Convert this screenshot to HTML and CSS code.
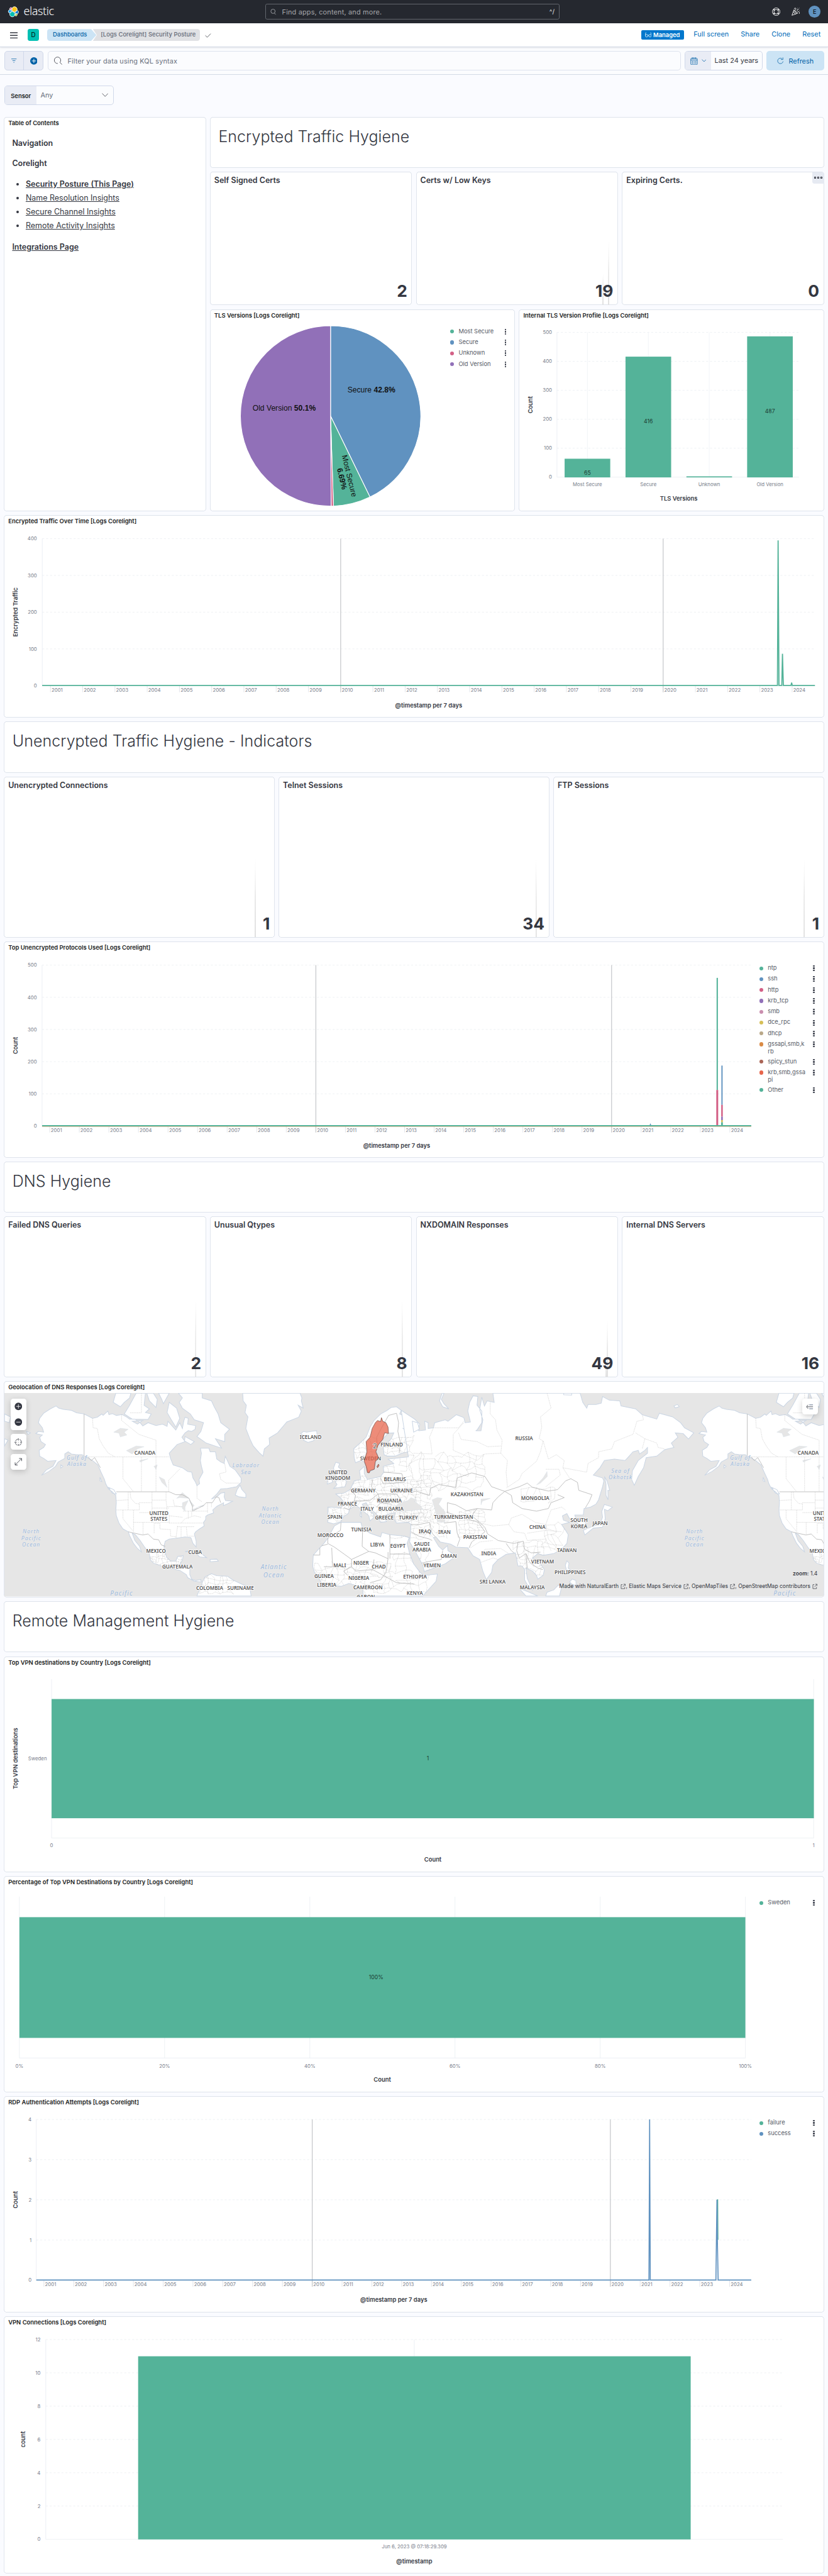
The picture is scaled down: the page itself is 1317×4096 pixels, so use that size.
FILE: index.html
```html
<!DOCTYPE html>
<html lang="en">
<head>
<meta charset="utf-8">
<title>[Logs Corelight] Security Posture - Elastic</title>
<link rel="stylesheet" href="styles.css">
</head>
<body>
<header class="topbar">
  <a class="brand">
    <svg class="brand-mark" viewBox="-1 -1 34 34"><g stroke="#fff" stroke-width="1.6" stroke-linejoin="round"><path fill="#FEC514" d="M12.58 13.787l7.002 3.211 7.066-6.213a7.849 7.849 0 00.152-1.557c0-4.287-3.488-7.773-7.776-7.773a7.78 7.78 0 00-6.415 3.396l-1.176 6.1 1.147 2.836z"/><path fill="#00BFB3" d="M5.333 21.228a7.964 7.964 0 00-.151 1.573 7.8 7.8 0 007.79 7.79 7.787 7.787 0 006.439-3.415l1.166-6.075-1.556-2.985-7.03-3.203-6.658 6.315z"/><path fill="#F04E98" d="M5.288 9.067l4.8 1.134L11.14 4.742a3.785 3.785 0 00-5.852 4.325z"/><path fill="#1BA9F5" d="M4.872 10.214a5.294 5.294 0 00-3.595 4.992 5.28 5.28 0 003.4 4.929l6.732-6.086-1.236-2.642-5.301-1.193z"/><path fill="#93C90E" d="M20.873 27.177a3.758 3.758 0 002.285.778 3.785 3.785 0 003.564-5.098l-4.796-1.12-1.053 5.44z"/><path fill="#0077CC" d="M21.848 20.563l5.279 1.234a5.297 5.297 0 003.595-4.991 5.283 5.283 0 00-3.408-4.932l-6.904 6.055 1.438 2.634z"/></g></svg>
    <span class="brand-name">elastic</span>
  </a>
  <div class="global-search">
    <svg class="gs-icon" viewBox="0 0 16 16"><circle cx="7" cy="6.6" r="5.6"/><path d="M10.6 11.2l3.6 4"/></svg>
    <span>Find apps, content, and more.</span><b>^/</b>
  </div>
  <div class="top-actions">
    <svg viewBox="0 0 16 16"><circle cx="8" cy="8" r="7.3"/><circle cx="8" cy="8" r="4.4"/><path stroke-width="2.2" d="M3 3.4l2 2M13 3.4l-2 2M3 12.600l2-2M13 12.600l-2-2"/></svg>
    <svg viewBox="0 0 16 16"><path d="M4.8 4.2L.8 15l11-4zM3.6 8l4 5M4.6 5.4l5 6M4.800 2.400Q6 .4 8 1.200Q9.400 2.600 7.400 5M10.500 6.500l1.600-3 1.600-.4M11.500 8.500l2.600-.6 1.400 1.200q.4 2-1 3M11 1.200h.6M14.400 1h.6M15 5.400h.5"/></svg>
    <span class="avatar">E</span>
  </div>
</header>
<nav class="appbar">
  <svg class="menu" viewBox="0 0 18 15"><path d="M0 1.4h18M0 7.5h18M0 13.6h18"/></svg>
  <span class="space">D</span>
  <div class="crumbs"><a class="crumb first">Dashboards</a><span class="crumb last">[Logs Corelight] Security Posture</span></div>
  <svg class="tick" viewBox="0 0 14 10"><path d="M.8 4.8l4.4 4.2L13.2.8"/></svg>
  <div class="app-links">
    <span class="badge"><svg viewBox="0 0 16 14"><circle cx="3.8" cy="9" r="3.2"/><circle cx="12.2" cy="9" r="3.2"/><path d="M.8 8.4L1 2.600Q1.200 1.400 3 1.400M15.200 8.400L15 2.600Q14.800 1.400 13 1.400M6.800 8.400q1.200-1 2.400 0"/></svg>Managed</span>
    <a>Full screen</a><a>Share</a><a>Clone</a><a>Reset</a>
  </div>
</nav>
<section class="querybar">
  <div class="filter-buttons">
    <span><svg viewBox="0 0 12 10"><path d="M0 1h12M2.6 5h6.8M5 9h2"/></svg></span>
    <span><svg class="plus" viewBox="0 0 17 17"><circle cx="8.5" cy="8.5" r="8.5"/><path d="M8.5 3.8v9.4M3.8 8.5h9.4"/></svg></span>
  </div>
  <div class="kql"><svg viewBox="0 0 18 18"><path d="M8 15A7 7 0 1 1 12.800 12.600L17.200 17.200"/></svg><span>Filter your data using KQL syntax</span></div>
  <div class="datepicker">
    <span class="cal"><svg viewBox="0 0 16 17"><rect x="1" y="2.4" width="14" height="13.8" rx="1.6"/><path d="M1 6h14M4.4 0v4M11.6 0v4M7.9 0v4"/><path class="dots" d="M3.6 8.8h9M3.6 11.2h9M3.6 13.6h9"/></svg><svg class="chev" viewBox="0 0 11 7"><path d="M.6.8l4.9 5 4.9-5"/></svg></span>
    <span class="range">Last 24 years</span>
  </div>
  <a class="refresh"><svg viewBox="0 0 15 16"><path d="M11.4 3.4A6.3 6.3 0 1 0 13.8 9.6M13.4.6v4.6H8.8"/></svg>Refresh</a>
</section>
<section class="controls">
  <div class="control"><b>Sensor</b><span>Any</span><svg class="chev" viewBox="0 0 15 9"><path d="M.8.8l6.7 7 6.7-7"/></svg></div>
</section>
<main class="grid">
  <article class="panel w12 h29">
    <h2>Table of Contents</h2>
    <div class="toc">
      <p><b>Navigation</b></p>
      <p><b>Corelight</b></p>
      <ul><li><a><b>Security Posture (This Page)</b></a></li><li><a>Name Resolution Insights</a></li><li><a>Secure Channel Insights</a></li><li><a>Remote Activity Insights</a></li></ul>
      <p><a><b>Integrations Page</b></a></p>
    </div>
  </article>
  <article class="panel w36 h4"><h1>Encrypted Traffic Hygiene</h1></article>
  <article class="panel metric w12 h10"><h3>Self Signed Certs</h3><strong>2</strong></article>
  <article class="panel metric w12 h10"><i class="spark" style="right:33px;height:72px"></i><i class="spark" style="right:20px;height:148px"></i><h3>Certs w/ Low Keys</h3><strong>19</strong></article>
  <article class="panel metric w12 h10"><span class="panel-menu"><i></i><i></i><i></i></span><h3>Expiring Certs.</h3><strong>0</strong></article>
  <article class="panel w18 h15"><h2>TLS Versions [Logs Corelight]</h2><div class="plot"><div id="pie"></div><ul class="legend wide"><li style="--c:#54b399"><span>Most Secure</span></li><li style="--c:#6092c0"><span>Secure</span></li><li style="--c:#d36086"><span>Unknown</span></li><li style="--c:#9170b8"><span>Old Version</span></li></ul></div></article>
  <article class="panel w18 h15"><h2>Internal TLS Version Profile [Logs Corelight]</h2><div class="plot"><div id="profile"></div></div></article>
  <article class="panel w48 h15"><h2>Encrypted Traffic Over Time [Logs Corelight]</h2><div class="plot"><div id="encrypted"></div></div></article>
  <article class="panel w48 h4"><h1>Unencrypted Traffic Hygiene - Indicators</h1></article>
  <article class="panel metric w16 h12"><i class="spark" style="right:43px;height:180px"></i><h3>Unencrypted Connections</h3><strong>1</strong></article>
  <article class="panel metric w16 h12"><i class="spark" style="right:29px;height:180px"></i><h3>Telnet Sessions</h3><strong>34</strong></article>
  <article class="panel metric w16 h12"><i class="spark" style="right:44px;height:180px"></i><h3>FTP Sessions</h3><strong>1</strong></article>
  <article class="panel w48 h16"><h2>Top Unencrypted Protocols Used [Logs Corelight]</h2><div class="plot"><div id="protocols"></div>
    <ul class="legend"><li style="--c:#54b399"><span>ntp</span></li><li style="--c:#6092c0"><span>ssh</span></li><li style="--c:#d36086"><span>http</span></li><li style="--c:#9170b8"><span>krb_tcp</span></li><li style="--c:#ca8eae"><span>smb</span></li><li style="--c:#d6bf57"><span>dce_rpc</span></li><li style="--c:#b9a888"><span>dhcp</span></li><li style="--c:#da8b45"><span>gssapi,smb,k<br>rb</span></li><li style="--c:#aa6556"><span>spicy_stun</span></li><li style="--c:#e7664c"><span>krb,smb,gssa<br>pi</span></li><li style="--c:#54b399"><span>Other</span></li></ul></div></article>
  <article class="panel w48 h4"><h1>DNS Hygiene</h1></article>
  <article class="panel metric w12 h12"><i class="spark" style="right:22px;height:178px"></i><h3>Failed DNS Queries</h3><strong>2</strong></article>
  <article class="panel metric w12 h12"><i class="spark" style="right:21px;height:178px"></i><h3>Unusual Qtypes</h3><strong>8</strong></article>
  <article class="panel metric w12 h12"><i class="spark" style="right:26px;height:32px"></i><i class="spark" style="right:23px;height:130px"></i><h3>NXDOMAIN Responses</h3><strong>49</strong></article>
  <article class="panel metric w12 h12"><h3>Internal DNS Servers</h3><strong>16</strong></article>
  <article class="panel w48 h16"><h2>Geolocation of DNS Responses [Logs Corelight]</h2>
    <div class="map"><div id="map"></div>
      <div class="map-tools">
        <div class="tool two"><svg viewBox="0 0 18 18"><circle cx="9" cy="9" r="8.5"/><path d="M9 4v10M4 9h10"/></svg><svg viewBox="0 0 18 18"><circle cx="9" cy="9" r="8.5"/><path d="M4 9h10"/></svg></div>
        <div class="tool line"><svg viewBox="0 0 18 18"><circle cx="9" cy="9" r="7.2" stroke-dasharray="7.3 4" stroke-dashoffset="-2"/><path d="M9 0v5M9 13v5M0 9h5M13 9h5M8.5 9h1"/></svg></div>
        <div class="tool line"><svg viewBox="0 0 18 18"><path d="M2 16L16 2M10.5 1.5H16.5V7.5M1.5 10.5V16.5H7.5"/></svg></div>
      </div>
      <div class="tool line layers"><svg viewBox="0 0 18 14"><path d="M2 7h14M5 2.500Q2 5 1.500 7Q2 9 5 11.500"/><path class="soft" d="M7.500 2.500H16M7.500 11.500H16"/></svg></div>
      <div class="map-zoom"><b>zoom:</b> 1.4</div>
      <div class="credits">Made with NaturalEarth <svg viewBox="0 0 13 13"><path d="M5 2H1.500V12H10.500V8M7.500 1H12V5.500M12 1L5.500 7.500"/></svg>, Elastic Maps Service <svg viewBox="0 0 13 13"><path d="M5 2H1.500V12H10.500V8M7.500 1H12V5.500M12 1L5.500 7.500"/></svg>, OpenMapTiles <svg viewBox="0 0 13 13"><path d="M5 2H1.500V12H10.500V8M7.500 1H12V5.500M12 1L5.500 7.500"/></svg>, OpenStreetMap contributors <svg viewBox="0 0 13 13"><path d="M5 2H1.500V12H10.500V8M7.500 1H12V5.500M12 1L5.500 7.500"/></svg></div>
    </div></article>
  <article class="panel w48 h4"><h1>Remote Management Hygiene</h1></article>
  <article class="panel w48 h16"><h2>Top VPN destinations by Country [Logs Corelight]</h2><div class="plot"><div id="vpncountry"></div></div></article>
  <article class="panel w48 h16"><h2>Percentage of Top VPN Destinations by Country [Logs Corelight]</h2><div class="plot"><div id="vpnpercent"></div><ul class="legend"><li style="--c:#54b399"><span>Sweden</span></li></ul></div></article>
  <article class="panel w48 h16"><h2>RDP Authentication Attempts [Logs Corelight]</h2><div class="plot"><div id="rdp"></div><ul class="legend"><li style="--c:#54b399"><span>failure</span></li><li style="--c:#6092c0"><span>success</span></li></ul></div></article>
  <article class="panel w48 h19"><h2>VPN Connections [Logs Corelight]</h2><div class="plot"><div id="vpnconn"></div></div></article>
</main>
<script src="app.js"></script>
</body>
</html>
```
FILE: styles.css
```css
*{box-sizing:border-box}
html{overflow:hidden}
body{margin:0;width:1898px;height:5902px;zoom:.693888;background:#fafbff;color:#343741;font-family:Inter,"Liberation Sans",sans-serif;font-size:15.75px;overflow:hidden}
svg{display:block;fill:none;stroke:currentColor;stroke-width:1.1;flex:none}
h1,h2,h3,p,ul{margin:0;padding:0}
.topbar{height:54px;background:#25282f;color:#fff;display:grid;grid-template-columns:608px 675px 1fr;align-items:center}
.brand{display:flex;align-items:center;gap:9px;padding-left:18px}
.brand-mark{width:27px;height:28px}
.brand-name{font:300 26px/30px "Noto Sans","Open Sans",sans-serif;letter-spacing:-.6px;margin-top:-3px}
.global-search{height:36px;border:1px solid #63676e;border-radius:4px;display:flex;align-items:center;padding:0 10px;gap:13px;color:#a5a7ab;font-size:15.75px;letter-spacing:.25px}
.global-search b{margin-left:auto;color:#d5d6d8;font-size:14px;font-weight:500}
.gs-icon{width:14px;height:14px;color:#c9cbcf}
.top-actions{display:flex;justify-content:flex-end;align-items:center;padding-right:17px;gap:26px}
.top-actions svg{width:19px;height:19px}
.avatar{width:27px;height:27px;border-radius:50%;background:#6092c0;color:#000;font-size:13.500px;display:grid;place-items:center;margin-left:-5px}
.appbar{height:54px;background:#fff;border-bottom:1px solid #d3dae6;box-shadow:0 1px 5px rgba(60,70,100,.22);display:flex;align-items:center;position:relative;padding:0 17px 0 23px}
.menu{width:18px;height:15px;stroke-width:2}
.space{width:27px;height:27px;border-radius:5px;background:#00bfb3;color:#000;display:grid;place-items:center;font-size:14px;margin-left:22px}
.crumbs{display:flex;margin-left:18px;font-size:13.500px;font-weight:500;line-height:27px;letter-spacing:.1px}
.crumb.first{width:113px;padding-left:13px;background:#cce4f5;color:#0061a6;border-radius:6px 0 0 6px;clip-path:polygon(0 0,101px 0,100% 50%,101px 100%,0 100%)}
.crumb.last{width:246px;padding-left:18px;margin-left:-8px;background:#e0e1e4;color:#646a77;border-radius:0 6px 6px 0;clip-path:polygon(0 0,100% 0,100% 100%,0 100%,9px 50%);white-space:nowrap}
.tick{width:14px;height:10px;margin-left:11px;margin-top:2px}
.app-links{margin-left:auto;display:flex;align-items:center;gap:27.500px;color:#006bb8;font-size:15.750px;font-weight:400;margin-top:-4px}
.badge{display:flex;align-items:center;gap:4px;background:#07c;color:#fff;font-weight:600;font-size:13.500px;height:22px;padding:0 9px;border-radius:3px;margin-right:-5px;margin-top:4px;width:98px}
.badge svg{width:15px;height:13px}
.querybar{height:63.500px;border-bottom:1px solid #d3dae6;display:flex;gap:9.500px;padding:9px 8px 9px 9.500px;background:#fbfcfe}
.querybar>*{height:45px;border-radius:7px}
.filter-buttons{width:90.500px;display:flex;background:#e9ecf5;border:1px solid #d0d8ea;color:#0061a6}
.filter-buttons span{flex:1;display:grid;place-items:center}
.filter-buttons span+span{border-left:1px solid #d0d8ea}
.filter-buttons svg{width:12px;height:10px}
.filter-buttons .plus{width:17px;height:17px;fill:#0061a6;stroke:none}
.plus path{stroke:#fff;stroke-width:1.4}
.kql{flex:1;border:1px solid #dde2ee;display:flex;align-items:center;padding-left:13px;gap:12px;color:#69707d;background:#fbfcfe;letter-spacing:.2px}
.kql svg{width:19px;height:19px;color:#343741}
.datepicker{width:178px;display:flex;border:1px solid #d0d8ea;overflow:hidden;background:#fbfcfe}
.cal{width:59px;background:#e9ecf5;display:flex;align-items:center;justify-content:center;gap:9px;color:#0061a6}
.cal svg{width:17px;height:18px}
.cal .dots{stroke-dasharray:1.800 1.800;stroke-width:1.500}
.cal .chev{width:11px;height:7px}
.range{flex:1;text-align:center;line-height:42px;font-size:15.750px;white-space:nowrap}
.refresh{width:133px;background:#cce4f5;color:#0061a6;display:flex;align-items:center;justify-content:center;gap:11px;font-weight:400;font-size:15.750px}
.refresh svg{width:15px;height:16px}
.controls{height:96px;padding:24px 9.500px}
.control{width:251px;height:45px;border:1px solid #d0d8ea;border-radius:7px;display:flex;align-items:center;overflow:hidden;background:#fbfcfe}
.control b{width:73px;align-self:stretch;background:#e9ecf5;font-size:13.500px;font-weight:600;color:#1a1c21;line-height:45px;padding-left:14px}
.control span{margin-left:9px;color:#69707d;margin-right:auto}
.control .chev{width:15px;height:9px;margin-right:11px}
.grid{display:grid;grid-template-columns:repeat(48,minmax(0,1fr));grid-template-rows:repeat(179,minmax(0,1fr));height:5629.500px;gap:9px;padding:0 9px}
.panel{background:#fff;box-shadow:inset 0 0 0 1px #d3dae6;border-radius:7px;position:relative;min-width:0;overflow:hidden}
.w12{grid-column:span 12}.w16{grid-column:span 16}.w18{grid-column:span 18}.w36{grid-column:span 36}.w48{grid-column:span 48}
.h4{grid-row:span 4}.h10{grid-row:span 10}.h12{grid-row:span 12}.h15{grid-row:span 15}.h16{grid-row:span 16}.h19{grid-row:span 19}.h29{grid-row:span 29}
h2{font-size:13.600px;line-height:28px;height:27px;padding-left:10px;font-weight:600;color:#1a1c21}
h1{font-size:36px;font-weight:300;line-height:44px;padding:23px 19.500px;letter-spacing:.08px}
.toc{padding:22px 19px;font-size:18px;line-height:22px}
.toc b{font-weight:600}
.toc p{margin-bottom:25px}
.toc ul{padding-left:31px;margin-bottom:26px}
.toc li{margin-bottom:10px}
.toc a{text-decoration:underline;text-underline-offset:2px}
.metric{display:flex;flex-direction:column;justify-content:space-between;padding:9px 11px 11px 10px}
.metric h3{font-size:18px;line-height:24px;font-weight:600}
.metric strong{font-size:38px;line-height:44px;font-weight:700;text-align:right;position:relative}
.spark{position:absolute;bottom:1px;width:3px;background:linear-gradient(#f4f4f4,#e0e0e0);clip-path:polygon(50% 0,100% 50%,100% 100%,0 100%,0 50%)}
.panel-menu{position:absolute;right:0;top:1px;width:27px;height:27px;background:#e6eaf2;border-radius:0 7px 0 5px;display:flex;gap:2.500px;padding:10px 4px}
.panel-menu i{width:5px;height:5px;border:1.500px solid #343741}
.plot{display:flex;align-items:flex-start}
.legend{list-style:none;flex:1;padding:25px 22px 0 5px;font-size:13.500px;color:#565b66}
.legend.wide{padding:15px 20px 0 5px}
.legend li{display:grid;grid-template-columns:9px 1fr 4px;column-gap:10px;line-height:17.500px;min-height:20px;margin-bottom:4.900px;align-items:start}
.legend li:before{content:"";width:9px;height:9px;border-radius:50%;background:var(--c);margin-top:5px}
.legend li:after{content:"";width:4px;height:13px;margin-top:3px;background:repeating-linear-gradient(#50545f 0 3.400px,transparent 3.400px 4.800px)}
.chart{stroke:none}
.chart text{font-family:Inter,"Liberation Sans",sans-serif;fill:#7a808c;font-size:11.250px}
.chart .ttl{font-size:13.500px;font-weight:600;fill:#343741}
.chart .val{fill:#1c3d33;font-size:12.500px}
.chart .pl{font-family:"Liberation Sans",Arial,sans-serif;font-size:17.500px;fill:#111}
.map{position:relative;margin:0 1px;height:466px}
.map-tools{position:absolute;left:14px;top:13px;display:grid;gap:9px}
.tool{width:36px;height:36px;background:#fff;border-radius:6px;display:grid;place-items:center;box-shadow:0 4px 14px rgba(0,0,0,.18)}
.tool.two{height:72px}
.tool svg{width:18px;height:18px;fill:#343741;stroke:none}
.tool path{stroke:#fff;stroke-width:1.200}
.tool.line svg{fill:none;stroke:#343741}
.tool.line path{stroke:#343741}
.tool.line .soft{stroke:#98a2b3;stroke-width:2}
.layers{position:absolute;right:13px;top:13px}
.layers svg{height:14px}
.map-zoom{position:absolute;right:14px;bottom:41px;font-size:12.300px;line-height:20px}
.map-zoom b{font-weight:600}
.credits{position:absolute;right:14px;bottom:12px;font-size:12.300px;line-height:20px;white-space:nowrap}
.credits svg{display:inline-block;width:12px;height:13px;vertical-align:-2px;margin-left:1px}
.land{fill:#fff;stroke:#cbd6e4;stroke-width:1.500;vector-effect:non-scaling-stroke}
.water{fill:#e6e6e6;stroke:#cbd6e4;stroke-width:1}
.admin{fill:none;stroke:#cacaca;stroke-width:.8;vector-effect:non-scaling-stroke;stroke-dasharray:3 1}
.border{fill:none;stroke:#b5b5b5;stroke-width:1.200;vector-effect:non-scaling-stroke}
.chart .country{font:600 11.600px "Noto Sans",sans-serif;fill:#555;stroke:#fff;stroke-width:2.500px;paint-order:stroke;stroke-linejoin:round}
.chart .ocean{font:italic 400 12.300px "Noto Sans",sans-serif;fill:#9db9dc;letter-spacing:1.500px;stroke:#f0f0f0;stroke-width:1.200px;paint-order:stroke}
```
FILE: app.js
```js
const GREEN = '#54b399', BLUE = '#6092c0', PINK = '#d36086', PURPLE = '#9170b8';

function mount(id, x, y, w, h, body) {
  document.getElementById(id).innerHTML =
    `<svg class="chart" width="${w}" height="${h}" viewBox="${x} ${y} ${w} ${h}">${body}</svg>`;
}
const text = (s, x, y, anchor = 'middle', cls = '', extra = '') =>
  `<text x="${x}" y="${y}" dy=".36em" text-anchor="${anchor}" class="${cls}" ${extra}>${s}</text>`;
const line = (x1, y1, x2, y2, color, width = 1.1, dash = '') =>
  `<path d="M${x1} ${y1}L${x2} ${y2}" stroke="${color}" stroke-width="${width}" stroke-dasharray="${dash}" fill="none"/>`;
const rect = (x, y, x2, y2, color = GREEN) =>
  `<rect x="${x}" y="${y}" width="${x2 - x}" height="${y2 - y}" fill="${color}"/>`;
const poly = (pts, color, width = 2.2) =>
  `<polyline points="${pts}" fill="none" stroke="${color}" stroke-width="${width}"/>`;
const side = (s, x, y) => text(s, x, y, 'middle', 'ttl', `transform="rotate(-90 ${x} ${y})"`);

// Horizontal value grid with its labels, drawn upwards from zero.
function valueGrid(x1, x2, zero, top, max, step, labelX) {
  let out = line(x1, top, x1, zero, '#e6eaf2');
  for (let v = 0; v <= max; v += step) {
    const y = zero - (zero - top) * v / max;
    out += line(x1, y, x2, y, '#e9ecf1', 1.1, v ? '4.5 4.5' : '') + text(v, labelX, y, 'end');
  }
  return out;
}
function years(first, pitch, top, zero) {
  let out = '';
  for (let i = 0; i < 24; i++) {
    const x = first + i * pitch, decade = (2001 + i) % 10 === 0;
    out += line(x, decade ? top : zero, x, zero + 15, decade ? '#c6c8cb' : '#d8dce3', decade ? 1.8 : 1.1);
    out += text(2001 + i, x + 2.5, zero + 10, 'start');
  }
  return out;
}

// TLS versions pie
(() => {
  const cx = 758.4, cy = 953.2, r = 206.6;
  const at = f => [cx + r * Math.sin(f * 2 * Math.PI), cy - r * Math.cos(f * 2 * Math.PI)];
  let from = 0, out = '';
  for (const [share, color] of [[.428, BLUE], [.0669, GREEN], [.0041, PINK], [.501, PURPLE]]) {
    const a = at(from), b = at(from + share);
    out += `<path d="M${cx} ${cy}L${a}A${r} ${r} 0 ${share > .5 ? 1 : 0} 1 ${b}Z" fill="${color}" stroke="#fff" stroke-width="1.6"/>`;
    from += share;
  }
  out += text('Secure <tspan font-weight="700">42.8%</tspan>', 852, 892.6, 'middle', 'pl');
  out += text('Old Version <tspan font-weight="700">50.1%</tspan>', 652, 935, 'middle', 'pl');
  out += text('Most Secure', 802, 1090.5, 'middle', 'pl', 'transform="rotate(76.5 802 1090.5)"');
  out += text('<tspan font-weight="700">6.69%</tspan>', 785, 1097, 'middle', 'pl', 'transform="rotate(76.5 785 1097)"');
  mount('pie', 482, 735, 546, 436, out);
})();

// Internal TLS profile
(() => {
  let out = valueGrid(1277.8, 1832.6, 1093.4, 761.6, 500, 100, 1266.4);
  const bars = [['Most Secure', 1347.6, 1051.2, 65, 1083], ['Secure', 1487.2, 817.3, 416, 966], ['Unknown', 1626.8, 1091.6, '', 0], ['Old Version', 1766, 770.8, 487, 943]];
  for (const [name, x, y, v, ly] of bars) {
    out += line(x, 761.6, x, 1093.4, '#edf0f5') + rect(x - 52.3, y, x + 52.3, 1094) + text(name, x, 1110);
    if (v) out += text(v, x, ly, 'middle', 'val');
  }
  out += text('TLS Versions', 1557, 1143, 'middle', 'ttl') + side('Count', 1217, 927.5);
  mount('profile', 1190, 735, 698, 436, out);
})();

// Encrypted traffic over time
mount('encrypted', 9, 1207.5, 1880, 436,
  valueGrid(97.2, 1866.5, 1571, 1234.2, 400, 100, 85) + years(116, 73.92, 1234.2, 1571) +
  poly('97,1570.5 1782.5,1570.5 1784,1238 1786,1570.5 1792.500,1570.5 1794,1498 1796,1570.5 1813.500,1570.5 1815,1564 1816.500,1570.5 1868.500,1570.5', GREEN, 2.6) +
  text('@timestamp per 7 days', 983, 1616, 'middle', 'ttl') + side('Encrypted Traffic', 36.4, 1402.6));

// Unencrypted protocols
mount('protocols', 9, 2184, 1727, 467,
  valueGrid(96.8, 1722.5, 2579.4, 2210.8, 500, 100, 84.7) + years(114.3, 67.79, 2210.8, 2579.4) +
  poly('1490,2579 1491.3,2576 1492.500,2579', BLUE) +
  line(1644.5, 2240, 1644.5, 2497, GREEN, 3) + line(1644.5, 2497, 1644.5, 2579, PINK, 4.4) +
  line(1655.4, 2441, 1655.4, 2531, BLUE, 2.8) + line(1655.4, 2531, 1655.4, 2558, PINK, 3.6) + line(1655.4, 2558, 1655.4, 2566, PURPLE, 3.8) +
  line(1655.4, 2566, 1655.4, 2571, '#d6bf57', 4) + line(1655.4, 2571, 1655.4, 2579, GREEN, 4) +
  line(96.8, 2580.6, 1722.5, 2580.6, '#da8b45', 1) + line(96.8, 2579, 1722.5, 2579, GREEN, 2.8) +
  text('@timestamp per 7 days', 909.7, 2624.7, 'middle', 'ttl') + side('Count', 35.7, 2394.8));

// VPN destinations
mount('vpncountry', 9, 3822, 1880, 467,
  line(118.6, 3848, 118.6, 4212, '#e6eaf2') + line(1865.5, 3848, 1865.5, 4212, '#e9ecf1') + line(118.6, 4212, 1865.5, 4212, '#e9ecf1') +
  rect(118.6, 3893.4, 1866, 4166.6) + text('Sweden', 107.7, 4029.6, 'end') + text('0', 118.6, 4229) + text('1', 1865.5, 4229) +
  text('1', 981, 4029.6, 'middle', 'val') + text('Count', 992.6, 4261, 'middle', 'ttl') + side('Top VPN destinations', 35.7, 4029.6));

(() => {
  let out = line(44.8, 4715.7, 1709, 4715.7, '#e6eaf2');
  for (let i = 0; i <= 5; i++) out += line(44.8 + i * 332.84, 4346, 44.8 + i * 332.84, 4715.7, '#e9ecf1') + text(i * 20 + '%', 44.8 + i * 332.84, 4734);
  out += rect(44.8, 4392.9, 1709, 4669.6) + text('100%', 862.5, 4531, 'middle', 'val') + text('Count', 876.6, 4764.8, 'middle', 'ttl');
  mount('vpnpercent', 9, 4326, 1727, 467, out);
})();

// RDP attempts
mount('rdp', 9, 4830, 1727, 467,
  valueGrid(83.5, 1722.5, 5224.4, 4856, 4, 1, 72.6) + years(101, 68.34, 4856, 5224.4) +
  poly('1644.2,5040 1645.600,5040 1646.200,5132', GREEN, 2) +
  poly('83.500,5224 1488,5224 1489.500,4856 1491,5224 1641.500,5224 1643.800,5040 1644.800,5132 1646.500,5224 1722.500,5224', BLUE, 2.4) +
  text('@timestamp per 7 days', 903, 5269, 'middle', 'ttl') + side('Count', 35.7, 5040));

// VPN connections
mount('vpnconn', 9, 5334, 1880, 561,
  valueGrid(105.3, 1795, 5817.8, 5360, 12, 2, 93.2) + line(950, 5360, 950, 5400, '#e6eaf2') +
  rect(317, 5398.3, 1583.6, 5818) + text('Jun 6, 2023 @ 07:18:29.309', 950, 5834) +
  text('@timestamp', 950, 5867.5, 'middle', 'ttl') + side('count', 53.3, 5588.5));

// World map. Tile units are stretched to the projection by the group transform.
(() => {
  const america = 'M150 270L165 235 190 205 212 185 222 200 240 208 270 215 290 232 318 240 350 270 368 262 385 240 390 250 408 220 412 245 425 238 440 250 462 244 480 262 490 275 510 275 530 300 540 322 560 300 590 320 615 310 632 325 635 290 650 320 665 350 680 300 690 340 695 290 700 262 712 270 710 310 740 320 738 345 725 360 712 355 700 370 688 400 700 430 670 450 655 480 640 510 645 545 655 590 690 610 710 635 725 640 730 680 740 710 745 732 755 720 753 690 768 640 762 600 758 560 762 510 758 475 790 475 795 500 815 500 820 550 835 570 848 580 852 530 860 560 870 600 890 625 900 650 912 680 912 710 895 740 860 752 835 755 820 790 800 825 820 810 835 785 850 780 848 810 853 835 880 840 860 858 845 870 846 850 820 875 805 900 808 920 785 935 778 945 778 965 770 985 772 1010 755 1030 740 1050 735 1065 742 1115 742 1155 730 1130 722 1090 700 1085 665 1095 640 1100 625 1115 620 1150 625 1190 630 1225 645 1250 665 1250 672 1220 693 1213 690 1245 680 1275 718 1300 718 1345 725 1375 740 1385 760 1378 762 1395 735 1390 710 1365 705 1345 680 1315 640 1300 610 1285 580 1265 568 1240 565 1200 545 1150 530 1110 512 1070 500 1060 510 1110 528 1150 535 1188 520 1165 505 1130 490 1075 485 1050 465 1030 450 990 440 940 438 900 440 850 438 800 425 775 410 755 400 720 395 690 382 640 370 590 350 560 330 540 310 520 290 520 270 515 258 500 245 515 245 545 220 570 210 600 185 635 157 662 175 625 200 600 212 560 180 565 165 545 150 530 148 490 165 470 172 450 155 430 150 400 160 385 135 375 145 360 165 365 160 335 145 300Z M438 97L428 160 455 190 470 160 490 130 495 97Z M515 97L490 180 470 240 500 275 560 278 572 240 550 230 565 205 545 180 550 97Z M555 97L565 150 590 195 595 140 580 97Z M600 97L612 140 618 170 640 97Z M675 97L690 130 678 160 690 200 720 240 735 280 770 300 760 360 745 395 780 440 838 475 815 410 850 430 850 380 868 345 835 300 825 240 810 190 800 150 765 130 765 97Z M640 160L632 230 648 280 665 330 680 270 668 200Z M500 290L520 310 540 285Z M700 395L735 430 722 450 698 425Z M890 797L897 760 908 730 915 760 930 790 930 815 905 810Z M410 745L430 760 440 790 425 785Z M378 675L385 705 378 700Z M700 1185L730 1178 765 1205 782 1228 755 1222 740 1195Z M795 1240L820 1238 826 1252 795 1256Z M745 1491L757 1440 765 1400 775 1360 800 1338 820 1352 860 1355 880 1380 915 1410 945 1435 950 1491Z M230 590L238 600 230 612Z';
  const russia = x => x + 1564.7;
  const east = pts => pts.map(([x, y]) => `${russia(x)} ${y}`).join(' ');
  const lands = [
    'M918 97L920 150 932 180 927 230 938 260 930 340 945 410 958 460 980 505 995 530 1000 480 1020 450 1018 405 1050 370 1085 295 1130 262 1140 220 1128 180 1147 200 1140 150 1142 130 1135 97Z',
    'M1138 375L1148 360 1160 365 1185 358 1198 355 1200 395 1185 425 1165 435 1148 420 1155 400Z',
    'M1270 572L1285 580 1280 605 1290 620 1292 665 1305 690 1312 705 1305 740 1285 745 1262 752 1275 725 1268 705 1278 690 1265 650 1262 610Z M1240 690L1255 680 1258 710 1238 722Z',
    'M1345 575L1340 540 1338 480 1365 435 1385 400 1400 330 1415 285 1440 240 1465 215 1480 195 1500 190 1518 215 1512 240 1530 255 1568 275 1585 310 1560 350 1540 345 1525 340 1545 370 1565 400 1565 440 1540 480 1545 500 1520 510 1495 530 1465 530 1453 520 1450 470 1480 410 1490 370 1468 372 1450 410 1430 455 1422 490 1432 540 1420 570 1415 620 1395 642 1388 610 1378 570 1365 560Z',
    `M1518 215L1568 275 1588 310 1582 350 ${east([[20,355],[45,350],[42,290],[55,300],[55,340],[75,335],[80,300],[120,280],[130,290],[162,245],[190,265],[195,300],[215,295],[205,220],[212,160],[225,115],[243,120],[240,180],[258,220],[258,300],[240,350],[235,355],[255,355],[262,280],[250,210],[258,125],[268,185],[278,150],[305,160],[300,97],[630,97],[640,160],[655,200],[660,175],[690,175],[710,165],[715,120],[740,145],[780,150],[785,185],[840,205],[865,245],[920,275],[930,235],[980,260],[1010,300],[1025,335],[1060,370],[1040,412],[1020,375],[990,370],[1000,400],[975,440],[985,470],[950,485],[920,530],[880,540],[870,610],[850,670],[835,730],[825,690],[828,630],[850,560],[885,510],[885,470],[875,490],[855,515],[850,490],[830,500],[808,545],[800,560],[760,550],[722,560],[705,610],[680,660],[715,680],[720,700],[715,740],[700,830],[690,860],[670,880],[645,890],[642,935],[610,935],[615,965],[650,985],[655,1015],[635,1020],[615,980],[590,960],[580,925],[563,940],[567,970],[590,985],[560,1000],[575,1040],[585,1070],[580,1130],[560,1170],[530,1200],[490,1212],[470,1200],[450,1230],[475,1260],[495,1310],[490,1350],[470,1375],[465,1350],[450,1320],[425,1300],[430,1370],[450,1450],[435,1430],[420,1380],[420,1310],[410,1285],[395,1285],[385,1195],[350,1205],[320,1240],[300,1280],[295,1330],[275,1378],[262,1320],[250,1240],[225,1215],[205,1160],[160,1155],[140,1135],[100,1120],[85,1085],[75,1090],[95,1150],[110,1175],[128,1145],[130,1180],[162,1215],[120,1270],[40,1325],[35,1280],[5,1180],[-15,1120]])} 1552 1080 1555 1000 1545 985 1500 990 1490 960 1495 920 1475 925 1450 940 1462 980 1440 985 1425 930 1395 880 1385 850 1370 860 1380 890 1412 925 1415 950 1400 975 1395 940 1360 885 1345 870 1322 895 1318 925 1300 945 1290 980 1262 995 1240 985 1240 880 1290 885 1302 850 1290 820 1270 790 1300 785 1325 760 1340 700 1365 690 1360 630 1378 600 1378 650 1390 690 1440 670 1452 640 1450 600 1470 590 1490 580 1468 550 1545 535Z`,
    `M1290 985L1365 985 1372 1030 1400 1060 1440 1085 1445 1055 1475 1070 1530 1080 1548 1090 1540 1130 ${east([[-15,1200],[0,1270],[25,1330],[40,1350],[90,1340],[85,1390],[50,1460],[35,1491]])} 1375 1491 1370 1430 1320 1405 1290 1425 1220 1410 1190 1330 1183 1290 1185 1210 1225 1130 1240 1095 1265 1010Z`,
    `M${east([[115,97],[105,140],[115,170],[133,205],[110,190],[98,150],[108,97]])}Z`,
    `M${east([[722,862],[752,880],[735,905],[722,895],[725,960],[715,1018],[680,1025],[648,1072],[642,1040],[680,1010],[705,1000],[715,950],[712,910]])}Z`,
    `M${east([[722,670],[732,700],[742,765],[735,765],[736,830],[728,800],[728,720]])}Z`,
    `M${east([[580,1250],[588,1265],[585,1300],[598,1320],[578,1310],[574,1280]])}Z M${east([[600,1375],[614,1385],[615,1420],[600,1410],[590,1395]])}Z`,
    `M${east([[500,1491],[505,1465],[530,1450],[548,1415],[560,1430],[552,1491]])}Z M${east([[400,1440],[430,1460],[470,1491],[425,1491]])}Z`,
    `M${east([[985,185],[998,175],[1005,190],[990,198]])}Z M${east([[568,97],[598,97],[598,110],[568,108]])}Z M${east([[-5,290],[15,300],[22,345],[0,365]])}Z`,
    'M1365 890L1368 950 1362 940Z M17 460L30 420 17 410Z M100 360L115 370 105 380Z M17 240L40 260 35 300 17 290Z'
  ];
  const lakes = [
    'M430 365L455 338 485 345 470 365 480 385 455 398 450 372Z M478 492L515 460 545 465 520 480 500 515Z M528 560L560 548 530 570Z M582 600L595 590 590 620Z M602 672L622 690 632 745 612 710Z M668 820L690 780 715 820 680 815Z M690 850L712 835 700 880 700 908 690 890Z M715 830L735 870 728 880Z M725 900L750 880 740 898Z M750 878L772 865 768 875Z',
    `M1568 840L1590 870 1600 895 1550 905 1510 915 1495 880 1510 850 1540 840 1555 815 1575 830Z`,
    `M${east([[70,830],[90,815],[108,820],[95,860],[120,915],[118,985],[90,980],[85,920]])}Z M${east([[505,635],[506,670],[480,715],[465,728],[490,680]])}Z M${east([[255,825],[290,820],[260,840],[255,865]])}Z`
  ];
  const naBorders = ['M318 240V525', 'M440 775H640L665 795 690 795 715 820 728 875 728 908 770 870 780 850 803 850 818 810 828 815 835 850', 'M485 1050L540 1072 560 1065 580 1100 600 1105 610 1140 625 1150', 'M333 535L345 560 358 540 380 610'];
  const naAdmin = ['M330 535H640', 'M535 97V232H490', 'M460 244V285L525 380 590 420V775', 'M350 270L352 335 368 340 375 410 390 460 410 510 435 535', 'M465 535V685L505 775', 'M535 535V775', 'M638 775V695L682 615', 'M745 732V820L765 845', 'M850 580L855 640 830 650 835 690 855 715H905', 'M485 775V830L440 835M485 830V900M440 900H527V850H575M492 775L495 820 512 855 527 858M575 775V985M575 832H628M575 887H640M527 918H575V985M465 900V960L503 1045M505 900V1050M541 985V1072M505 985H640M640 940V992M640 990H772M628 775V830L632 900 640 940 690 950M632 877H690M583 1060V992H605V1030L645 1035V1080L668 1085M672 1010L665 1095M685 1018V1085M705 1018L708 1080H735M670 1015H735M685 990L700 960 735 940 760 950M692 908H725V940M712 908V960M728 908H785M785 850V920M800 850V880M655 830L660 870 690 880'];
  const worldBorders = [
    'M1428 490L1425 400 1445 330 1470 250 1500 235M1500 235L1508 300 1505 360 1515 440 1510 510',
    'M1290 985L1288 1040 1240 1095V1130L1265 1155 1330 1240 1395 1185 1370 1150 1372 1030M1395 1185L1420 1195 1468 1235V1190M1475 1070V1235M1475 1203H1558M1255 1160L1258 1290H1225M1330 1240V1290L1300 1320 1315 1350M1330 1290L1345 1320 1410 1310 1415 1240M1468 1235L1460 1330 1440 1380 1400 1400M1183 1210H1210V1150L1240 1135M1410 1310L1445 1345 1500 1400 1568 1410',
    `M${east([[-10,780],[10,770],[60,800],[65,750],[95,725],[160,745],[165,680],[220,645],[270,670],[295,740],[345,772],[320,810],[300,850],[295,900],[240,890],[200,905],[160,865],[128,850],[128,920]])}`,
    `M${east([[345,772],[400,740],[430,715],[450,745],[510,770],[545,760],[575,700],[595,685],[620,710],[625,765],[675,795],[665,840],[650,885]])}`,
    `M${east([[345,772],[370,800],[375,850],[410,890],[465,908],[510,890],[520,850],[570,815],[545,795]])}`,
    `M${east([[240,890],[220,940],[250,985],[270,1020],[280,1065],[320,1110],[380,1130],[415,1115],[420,1170],[445,1195],[480,1190]])}`,
    `M${east([[125,915],[180,950],[245,985],[270,1050],[220,1120],[210,1160]])}M${east([[115,990],[160,980],[165,1060],[175,1100],[165,1150]])}`,
    `M${east([[-10,1000],[20,1000],[60,985],[70,1060],[100,1120]])}M${east([[-10,1050],[20,1080],[60,1100],[70,1110]])}M${east([[30,1265],[70,1250],[105,1240],[110,1180]])}`,
    `M${east([[395,1120],[390,1180],[400,1230],[425,1200],[440,1260],[470,1300],[490,1310]])}M${east([[425,1200],[430,1300]])}M${east([[350,1130],[370,1180],[380,1195]])}`,
    'M1302 885L1325 900M1325 760L1345 800 1340 840 1322 895M1340 840L1400 835 1430 790 1405 740 1410 690M1430 790L1500 790 1520 840M1452 640L1520 650 1530 710 1450 720 1440 680M1425 880L1440 850 1480 860M1430 790L1440 850'
  ];
  const worldAdmin = [
    `M${east([[505,97],[520,200],[480,260],[485,330],[475,410],[490,425],[480,500],[465,565],[410,650],[400,690],[350,750]])}`,
    `M${east([[290,160],[290,240],[310,280],[315,350],[335,420],[330,510],[270,515],[240,560],[150,490],[150,380],[190,300]])}`,
    `M${east([[170,370],[180,415],[240,430],[280,465],[330,460]])}M${east([[330,510],[355,560],[350,640],[355,740]])}`,
    `M${east([[490,425],[510,550],[540,520],[570,560],[565,610],[655,640],[660,580],[700,540],[700,500],[750,480],[760,430],[830,380],[845,290],[870,280],[865,245]])}`,
    `M${east([[840,370],[875,410],[920,440],[925,470],[950,480]])}M${east([[875,410],[865,480]])}M${east([[565,610],[590,680]])}`,
    `M${east([[500,620],[550,620],[555,660],[500,740]])}M${east([[0,510],[70,515],[65,440],[60,400],[75,335],[170,335],[190,290]])}`,
    `M${east([[250,990],[300,1010],[360,1000],[370,955],[410,930],[460,985],[500,1000],[520,900],[560,880],[575,900]])}`,
    `M${east([[360,1000],[380,1050],[420,1060],[430,1110],[500,1100],[520,1180]])}M${east([[430,1060],[500,1040],[560,1050]])}M${east([[500,1000],[510,1100],[540,1160]])}`,
    `M${east([[250,1215],[270,1170],[330,1165],[360,1200]])}M${east([[255,1260],[300,1230],[320,1240]])}M${east([[215,1160],[250,1120],[300,1110]])}`
  ];
  // Irregular district cells for the densely divided regions.
  let seed = 7;
  const rnd = () => (seed = (seed * 16807) % 2147483647) / 2147483647;
  const cells = (x0, y0, x1, y1, sx, sy) => {
    const cols = Math.floor((x1 - x0) / sx), rows = Math.floor((y1 - y0) / sy), p = [];
    for (let j = 0; j <= rows; j++) { p[j] = []; for (let i = 0; i <= cols; i++) p[j][i] = [x0 + i * sx + (rnd() - .5) * sx * .9 | 0, y0 + j * sy + (rnd() - .5) * sy * .9 | 0]; }
    let d = '';
    for (let j = 0; j <= rows; j++) for (let i = 0; i <= cols; i++) {
      if (i < cols && rnd() < .85) d += `M${p[j][i]}L${(p[j][i][0] + p[j][i + 1][0]) / 2 + 2} ${(p[j][i][1] + p[j][i + 1][1]) / 2 + (rnd() - .5) * sy * .4} ${p[j][i + 1]}`;
      if (j < rows && rnd() < .85) d += `M${p[j][i]}L${(p[j][i][0] + p[j + 1][i][0]) / 2 + (rnd() - .5) * sx * .4} ${(p[j][i][1] + p[j + 1][i][1]) / 2} ${p[j + 1][i]}`;
    }
    return `<path class="admin" d="${d}"/>`;
  };
  const P = (cls, arr) => arr.map(d => `<path class="${cls}" d="${d}"/>`).join('');
  const na = P('land', [america]) + `<g clip-path="url(#na-clip)">${cells(565, 1200, 700, 1300, 12, 20)}${cells(760, 1350, 880, 1491, 17, 30)}</g>` + P('water', [lakes[0]]) + P('border', naBorders) + P('admin', naAdmin);
  const sweden = 'M1443 265L1448 290 1460 300 1468 330 1470 374 1455 370 1448 415 1430 455 1422 500 1432 540 1420 568 1416 620 1400 630 1397 645 1390 643 1385 600 1378 565 1388 500 1385 430 1400 400 1408 340 1420 300 1428 285 1440 292Z M1426 600L1432 585 1434 595 1428 610Z';
  let out = `<defs><clipPath id="na-clip"><path d="${america}"/></clipPath><clipPath id="old-clip"><path d="${lands.join(' ')}"/></clipPath></defs><rect x="10" y="3192" width="1880" height="466" fill="#e6e6e6"/>
  <g transform="translate(0 3160) scale(.60587 .33333)">
  <g id="na">${na}</g><use href="#na" x="2509"/>${P('land', lands)}
  <g clip-path="url(#old-clip)">${cells(1240, 670, 1640, 980, 17, 25)}${cells(1340, 400, 1420, 570, 20, 35)}${cells(1440, 400, 1560, 660, 24, 34)}${cells(1560, 520, 1830, 760, 27, 46)}${cells(1480, 900, 1700, 1100, 18, 27)}${cells(1190, 1270, 1480, 1491, 22, 33)}${cells(1480, 1200, 1640, 1491, 28, 42)}${cells(1740, 900, 1840, 1100, 18, 24)}${cells(1940, 1120, 2060, 1360, 20, 38)}${cells(1970, 760, 2120, 890, 26, 44)}${cells(2060, 1000, 2140, 1180, 32, 42)}${P('admin', worldAdmin)}${P('border', worldBorders)}</g>
  ${P('water', lakes.slice(1))}</g>`;
  const put = (rows, off, cls, gap) => rows.forEach(([s, x, y]) => s.split('|').forEach((t, i) => {
    out += text(t, (x + off) * .60587, 3160 + y / 3 + i * gap, 'middle', cls);
  }));
  put([['CANADA', 548, 508], ['UNITED|STATES', 601, 921], ['MEXICO', 590, 1183], ['CUBA', 738, 1191], ['GUATEMALA', 671, 1291], ['COLOMBIA', 793, 1438], ['SURINAME', 910, 1438], ['ICELAND', 1175, 399], ['FINLAND', 1482, 450], ['SWEDEN', 1402, 544], ['UNITED|KINGDOM', 1278, 640], ['BELARUS', 1494, 688], ['GERMANY', 1374, 768], ['UKRAINE', 1519, 768], ['ROMANIA', 1473, 835], ['FRANCE', 1314, 856], ['ITALY', 1389, 892], ['BULGARIA', 1479, 892], ['SPAIN', 1267, 949], ['GREECE', 1454, 954], ['TURKEY', 1545, 954], ['TUNISIA', 1367, 1035], ['MOROCCO', 1250, 1075], ['LIBYA', 1427, 1138], ['EGYPT', 1505, 1146], ['NIGER', 1366, 1263], ['MALI', 1285, 1280], ['CHAD', 1433, 1290], ['GUINEA', 1226, 1354], ['NIGERIA', 1357, 1369], ['LIBERIA', 1236, 1417], ['CAMEROON', 1392, 1432], ['ETHIOPIA', 1570, 1360], ['KENYA', 1569, 1471], ['GABON', 1384, 1497]], 0, 'country', 13.2);
  put([['RUSSIA', 418, 408], ['KAZAKHSTAN', 202, 794], ['MONGOLIA', 460, 819], ['TURKMENISTAN', 151, 948], ['CHINA', 468, 1018], ['SOUTH|KOREA', 626, 972], ['JAPAN', 706, 993], ['IRAQ', 43, 1047], ['IRAN', 117, 1053], ['PAKISTAN', 233, 1087], ['SAUDI|ARABIA', 31, 1134], ['OMAN', 133, 1218], ['INDIA', 284, 1200], ['YEMEN', 70, 1281], ['TAIWAN', 580, 1178], ['VIETNAM', 488, 1254], ['PHILIPPINES', 592, 1327], ['SRI LANKA', 299, 1395], ['MALAYSIA', 449, 1432], ['CANADA', 1493, 508], ['UNITED|STATES', 1546, 921], ['MEXICO', 1535, 1183]], 1564.7, 'country', 13.2);
  put([['Gulf of|Alaska', 291, 540], ['Labrador|Sea', 931, 595], ['North|Atlantic|Ocean', 1023, 893], ['North|Pacific|Ocean', 118, 1049]], 0, 'ocean', 14.6);
  put([['Gulf of|Alaska', 1236, 540], ['Sea of|Okhotsk', 783, 632], ['North|Pacific|Ocean', 1063, 1049]], 1564.7, 'ocean', 14.6);
  const big = (s, x, y) => text(s, x * .60587, 3160 + y / 3, 'middle', 'ocean', 'style="font-size:14.500px"');
  out += big('Atlantic', 1036, 1290) + big('Ocean', 1036, 1347) + big('Pacific', 460, 1472) + big('Pacific', 2969, 1472);
  // The matched country lies over the base map and its labels.
  out += `<path d="${sweden}" transform="translate(0 3160) scale(.60587 .33333)" fill="#e7664c" fill-opacity=".75" stroke="#6b4a42" stroke-width="1" vector-effect="non-scaling-stroke"/>` +
    text('2', 859, 3313.5, 'middle', '', 'style="font-size:15px;fill:#555;stroke:#eee;stroke-width:2px;paint-order:stroke"');
  mount('map', 10, 3192, 1878, 466, out);
})();
```
